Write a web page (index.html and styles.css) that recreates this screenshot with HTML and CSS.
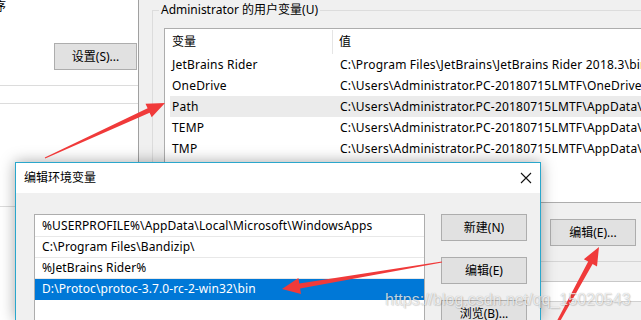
FILE: index.html
```html
<!DOCTYPE html>
<html lang="zh-CN">
<head>
<meta charset="utf-8">
<title>编辑环境变量</title>
<link rel="stylesheet" href="styles.css">
</head>
<body>
<div class="screen">
  <div class="sysprops">
    <div class="cut-label"><span class="cut-glyph">序</span></div>
    <div class="sp-btn-row"><button class="btn sp-btn">设置(S)...</button></div>
    <div class="sp-line sp-line-a"></div>
    <div class="sp-line sp-line-b"></div>
    <div class="sp-line sp-line-c"></div>
  </div>
  <div class="envwin">
    <div class="group">
      <div class="group-label">Administrator 的用户变量(U)</div>
      <div class="list">
        <div class="list-head">
          <div class="c1">变量</div>
          <div class="c2">值</div>
        </div>
        <div class="lrow"><div class="c1">JetBrains Rider</div><div class="c2">C:\Program Files\JetBrains\JetBrains Rider 2018.3\bin</div></div>
        <div class="lrow"><div class="c1">OneDrive</div><div class="c2">C:\Users\Administrator.PC-20180715LMTF\OneDrive</div></div>
        <div class="lrow lrow-sel"><div class="c1">Path</div><div class="c2">C:\Users\Administrator.PC-20180715LMTF\AppData\Local\Microsoft</div></div>
        <div class="lrow"><div class="c1">TEMP</div><div class="c2">C:\Users\Administrator.PC-20180715LMTF\AppData\Local\Temp</div></div>
        <div class="lrow"><div class="c1">TMP</div><div class="c2">C:\Users\Administrator.PC-20180715LMTF\AppData\Local\Temp</div></div>
      </div>
      <div class="env-btns">
        <button class="btn env-btn">新建(N)...</button>
        <button class="btn env-btn">编辑(E)...</button>
      </div>
    </div>
    <div class="sysgroup">
      <div class="syslist"></div>
    </div>
  </div>
</div>

<div class="dialog">
  <div class="titlebar">
    <span class="title">编辑环境变量</span>
    <svg class="close" width="12" height="12" viewBox="0 0 12 12"><path d="M1 1 L11 11 M11 1 L1 11" stroke="#111" stroke-width="1.1" fill="none"/></svg>
  </div>
  <div class="dbody">
    <div class="plist">
      <div class="prow">%USERPROFILE%\AppData\Local\Microsoft\WindowsApps</div>
      <div class="prow">C:\Program Files\Bandizip\</div>
      <div class="prow">%JetBrains Rider%</div>
      <div class="prow prow-sel">D:\Protoc\protoc-3.7.0-rc-2-win32\bin</div>
    </div>
    <div class="dbtns">
      <button class="btn dbtn">新建(N)</button>
      <button class="btn dbtn">编辑(E)</button>
      <button class="btn dbtn">浏览(B)...</button>
    </div>
  </div>
</div>

<svg class="arrows" width="641" height="320" viewBox="0 0 641 320">
  <polygon fill="#f03a3a" points="44.8,157.5 147.6,108.2 145.5,103.7 165,103 151.7,117.3 149.6,112.8 45.2,158.5"/>
  <polygon fill="#f03a3a" points="441.9,261.5 299.3,283.5 298.4,278.1 282,289 301.0,293.9 300.1,288.5 442.1,262.5"/>
  <polygon fill="#f03a3a" points="556.7,321.3 588.2,261.6 583.8,259.2 599,247 597.0,266.4 592.6,264.0 559.3,322.7"/>
</svg>

<div class="watermark">https://blog.csdn.net/qq_15020543</div>
</body>
</html>
```

FILE: styles.css
```css
* { box-sizing: border-box; }

html, body {
  margin: 0;
  padding: 0;
}

body {
  width: 641px;
  height: 320px;
  overflow: hidden;
  position: relative;
  background: #f0f0f0;
  font-family: "Noto Sans", "Noto Sans CJK SC", sans-serif;
  font-size: 12px;
  color: #000;
}

.screen {
  display: flex;
  height: 320px;
  overflow: hidden;
}

/* left window */
.sysprops {
  width: 139px;
  flex: none;
  background: #fff;
  border-right: 1px solid #a0a0a0;
  display: flex;
  flex-direction: column;
}

.cut-label {
  height: 14px;
  line-height: 14px;
  overflow: hidden;
}

.cut-glyph {
  display: inline-block;
  margin-left: -6px;
  margin-top: -1px;
}

.sp-btn-row {
  margin-top: 29px;
  padding-left: 54px;
}

.btn {
  font-family: "Noto Sans", "Noto Sans CJK SC", sans-serif;
  font-size: 12px;
  color: #000;
  background: #e1e1e1;
  border: 1px solid #adadad;
  padding: 0;
  margin: 0;
  height: 27px;
  line-height: 25px;
  text-align: center;
}

.sp-btn {
  width: 83px;
}

.sp-line {
  height: 1px;
  background: #dcdcdc;
}
.sp-line-a { margin-top: 15px; }
.sp-line-b { margin-top: 17px; }
.sp-line-c { margin-top: 102px; }

/* environment variables window */
.envwin {
  flex: 1;
  min-width: 0;
  padding: 10px 0 0 13px;
  overflow: hidden;
}

.group {
  position: relative;
  border: 1px solid #dcdcdc;
  border-right: none;
  border-bottom: none;
  padding: 17px 0 15px 11px;
}

.group-label {
  position: absolute;
  top: -9px;
  left: 6px;
  padding: 0 2px;
  line-height: 16px;
  background: #f0f0f0;
  white-space: nowrap;
}

.list {
  height: 175px;
  background: #fff;
  border: 1px solid #adadad;
  border-right: none;
  overflow: hidden;
  white-space: nowrap;
}

.list-head {
  display: flex;
  height: 25px;
}
.list-head .c1 {
  flex: none;
  width: 168px;
  padding-left: 7px;
  border-right: 1px solid #e5e5e5;
  margin-top: 1px;
  height: 24px;
  line-height: 24px;
}
.list-head .c2 {
  padding-left: 6px;
  margin-top: 1px;
  line-height: 24px;
}

.lrow {
  display: flex;
  height: 21px;
  line-height: 21px;
  margin-left: 5px;
}
.lrow .c1 {
  flex: none;
  width: 163px;
  padding-left: 2px;
  letter-spacing: 0.2px;
}
.lrow .c2 {
  flex: none;
  padding-left: 7px;
  letter-spacing: 0.2px;
}
.lrow-sel {
  background: #ebebeb;
}

.env-btns {
  display: flex;
  gap: 14px;
  margin-top: 16px;
  padding-left: 286px;
}
.env-btn {
  width: 86px;
  flex: none;
}

.sysgroup {
  border-top: 1px solid #d5d5d5;
  padding-top: 19px;
  padding-left: 4px;
}
.syslist {
  background: #fff;
  border-top: 1px solid #c8c8c8;
  border-left: 1px solid #adadad;
  border-bottom: 1px solid #d0d0d0;
  height: 21px;
}

/* front dialog (window on the desktop) */
.dialog {
  position: absolute;
  left: 15px;
  top: 162px;
  width: 526px;
  height: 158px;
  overflow: hidden;
  border: 1px solid #2aa7cc;
  border-bottom: none;
  background: #f0f0f0;
  box-shadow: 0 0 14px rgba(0, 0, 0, 0.35);
}

.titlebar {
  height: 30px;
  background: #fff;
  display: flex;
  align-items: center;
  justify-content: space-between;
  padding: 0 8px;
}
.title {
  font-size: 12px;
  line-height: 16px;
}
.close {
  display: block;
}

.dbody {
  display: flex;
  gap: 16px;
  padding: 21px 0 0 18px;
}

.plist {
  width: 391px;
  height: 140px;
  background: #fff;
  border: 1px solid #adadad;
  padding-top: 1px;
}

.prow {
  height: 21px;
  line-height: 20px;
  padding-left: 7px;
  border-bottom: 1px solid #e8e8e8;
  white-space: nowrap;
  letter-spacing: 0.1px;
}
.prow-sel {
  background: #0078d7;
  color: #fff;
  border-bottom-color: #0078d7;
}

.dbtns {
  display: flex;
  flex-direction: column;
  gap: 16px;
}
.dbtn {
  width: 86px;
}

/* annotations */
.arrows {
  position: absolute;
  left: 0;
  top: 0;
  pointer-events: none;
}

.watermark {
  position: absolute;
  left: 385px;
  top: 291px;
  font-family: "Liberation Sans", sans-serif;
  font-size: 16px;
  color: rgba(255, 255, 255, 0.75);
  text-shadow: 0 0 1px rgba(0, 0, 0, 0.3), 1px 1px 1px rgba(0, 0, 0, 0.12);
  white-space: nowrap;
  pointer-events: none;
}
```
